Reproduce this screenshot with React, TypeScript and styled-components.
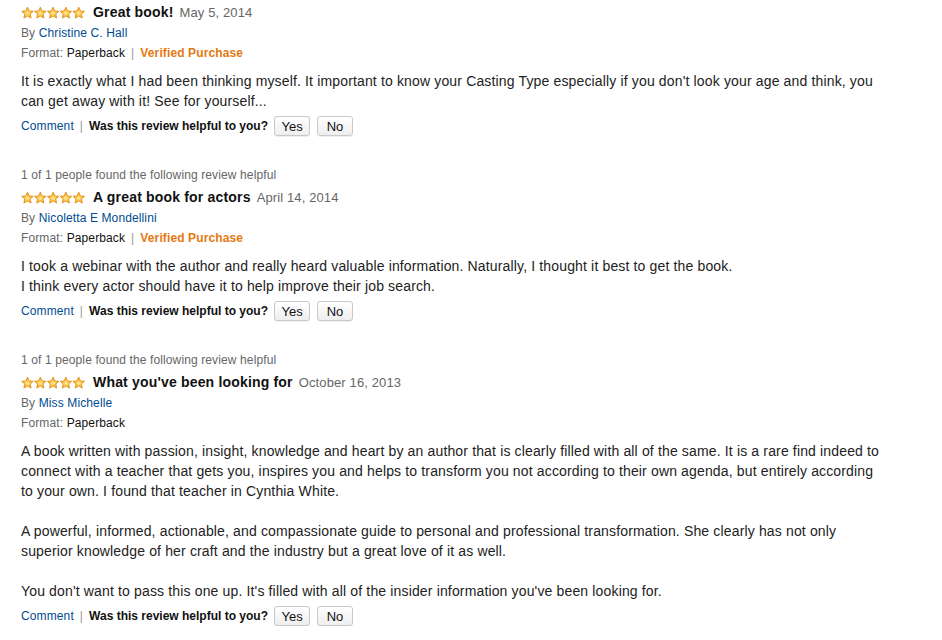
import React from "react";
import styled, { createGlobalStyle } from "styled-components";

const GlobalStyle = createGlobalStyle`
  html, body { margin: 0; padding: 0; background: #fff; }
  body { font-family: "Liberation Sans", Arial, sans-serif; color: #111; letter-spacing: 0.12px; }
`;

const Page = styled.div`
  padding: 1px 0 0 21px;
  width: 860px;
`;

const Review = styled.div`
  & + & { margin-top: 29px; }
`;

const HelpfulNote = styled.div`
  font-size: 12px;
  line-height: 21px;
  color: #666;
`;

const TitleRow = styled.div`
  display: flex;
  align-items: center;
  height: 22px;
`;

const Title = styled.span`
  font-size: 14px;
  font-weight: bold;
  color: #111;
  margin-left: 8px;
  letter-spacing: 0.18px;
`;

const DateText = styled.span`
  font-size: 13px;
  color: #666;
  margin-left: 6px;
`;

const MetaRow = styled.div`
  font-size: 12px;
  line-height: 20px;
  color: #666;
`;

const Link = styled.a`
  color: #004b91;
  text-decoration: none;
  cursor: pointer;
`;

const Dark = styled.span`
  color: #111;
`;

const Sep = styled.span`
  color: #999;
  margin: 0 6px;
`;

const Verified = styled.span`
  color: #e47911;
  font-weight: bold;
`;

const Body = styled.div`
  margin-top: 8px;
  font-size: 14px;
  line-height: 20px;
  color: #222;
  letter-spacing: 0.15px;
`;

const Para = styled.p`
  margin: 0;
  & + & { margin-top: 20px; }
`;

const ActionRow = styled.div`
  margin-top: 5px;
  height: 20px;
  display: flex;
  align-items: center;
  font-size: 12px;
`;

const Question = styled.span`
  font-weight: bold;
  color: #111;
  margin-right: 6px;
  letter-spacing: 0;
`;

const VoteButton = styled.button`
  font-family: "Liberation Sans", Arial, sans-serif;
  font-size: 13px;
  color: #111;
  height: 20px;
  width: 36px;
  padding: 0;
  border: 1px solid #c9c9c9;
  border-radius: 3px;
  background: linear-gradient(#ffffff, #eeeeee);
  box-shadow: 0 1px 0 rgba(0, 0, 0, 0.06);
  & + & { margin-left: 7px; }
`;

const Stars: React.FC = () => {
  const star = "M6.5 0.6 L8.2 4.4 L12.3 4.8 L9.2 7.5 L10.1 11.6 L6.5 9.5 L2.9 11.6 L3.8 7.5 L0.7 4.8 L4.8 4.4 Z";
  return (
    <svg width="64" height="13" viewBox="0 0 64 13" aria-label="5 out of 5 stars">
      <defs>
        <radialGradient id="sg" cx="50%" cy="55%" r="55%">
          <stop offset="0%" stopColor="#fff0a0" />
          <stop offset="50%" stopColor="#fcc040" />
          <stop offset="100%" stopColor="#f0921a" />
        </radialGradient>
      </defs>
      {[0, 1, 2, 3, 4].map((i) => (
        <path
          key={i}
          d={star}
          transform={`translate(${i * 12.8} 0.5)`}
          fill="url(#sg)"
          stroke="#e08a12"
          strokeWidth="0.8"
          strokeLinejoin="round"
        />
      ))}
    </svg>
  );
};

type ReviewData = {
  helpful?: string;
  title: string;
  date: string;
  author: string;
  verified: boolean;
  paragraphs: string[][];
};

const reviews: ReviewData[] = [
  {
    title: "Great book!",
    date: "May 5, 2014",
    author: "Christine C. Hall",
    verified: true,
    paragraphs: [
      [
        "It is exactly what I had been thinking myself. It important to know your Casting Type especially if you don't look your age and think, you can get away with it! See for yourself...",
      ],
    ],
  },
  {
    helpful: "1 of 1 people found the following review helpful",
    title: "A great book for actors",
    date: "April 14, 2014",
    author: "Nicoletta E Mondellini",
    verified: true,
    paragraphs: [
      [
        "I took a webinar with the author and really heard valuable information. Naturally, I thought it best to get the book.",
        "I think every actor should have it to help improve their job search.",
      ],
    ],
  },
  {
    helpful: "1 of 1 people found the following review helpful",
    title: "What you've been looking for",
    date: "October 16, 2013",
    author: "Miss Michelle",
    verified: false,
    paragraphs: [
      [
        "A book written with passion, insight, knowledge and heart by an author that is clearly filled with all of the same. It is a rare find indeed to connect with a teacher that gets you, inspires you and helps to transform you not according to their own agenda, but entirely according to your own. I found that teacher in Cynthia White.",
      ],
      [
        "A powerful, informed, actionable, and compassionate guide to personal and professional transformation. She clearly has not only superior knowledge of her craft and the industry but a great love of it as well.",
      ],
      [
        "You don't want to pass this one up. It's filled with all of the insider information you've been looking for.",
      ],
    ],
  },
];

export default function App() {
  return (
    <>
      <GlobalStyle />
      <Page>
        {reviews.map((r) => (
          <Review key={r.title}>
            {r.helpful && <HelpfulNote>{r.helpful}</HelpfulNote>}
            <TitleRow>
              <Stars />
              <Title>{r.title}</Title>
              <DateText>{r.date}</DateText>
            </TitleRow>
            <MetaRow>
              By <Link>{r.author}</Link>
            </MetaRow>
            <MetaRow>
              Format: <Dark>Paperback</Dark>
              {r.verified && (
                <>
                  <Sep>|</Sep>
                  <Verified>Verified Purchase</Verified>
                </>
              )}
            </MetaRow>
            <Body>
              {r.paragraphs.map((lines, pi) => (
                <Para key={pi}>
                  {lines.map((l, li) => (
                    <React.Fragment key={li}>
                      {li > 0 && <br />}
                      {l}
                    </React.Fragment>
                  ))}
                </Para>
              ))}
            </Body>
            <ActionRow>
              <Link>Comment</Link>
              <Sep>|</Sep>
              <Question>Was this review helpful to you?</Question>
              <VoteButton>Yes</VoteButton>
              <VoteButton>No</VoteButton>
            </ActionRow>
          </Review>
        ))}
      </Page>
    </>
  );
}
